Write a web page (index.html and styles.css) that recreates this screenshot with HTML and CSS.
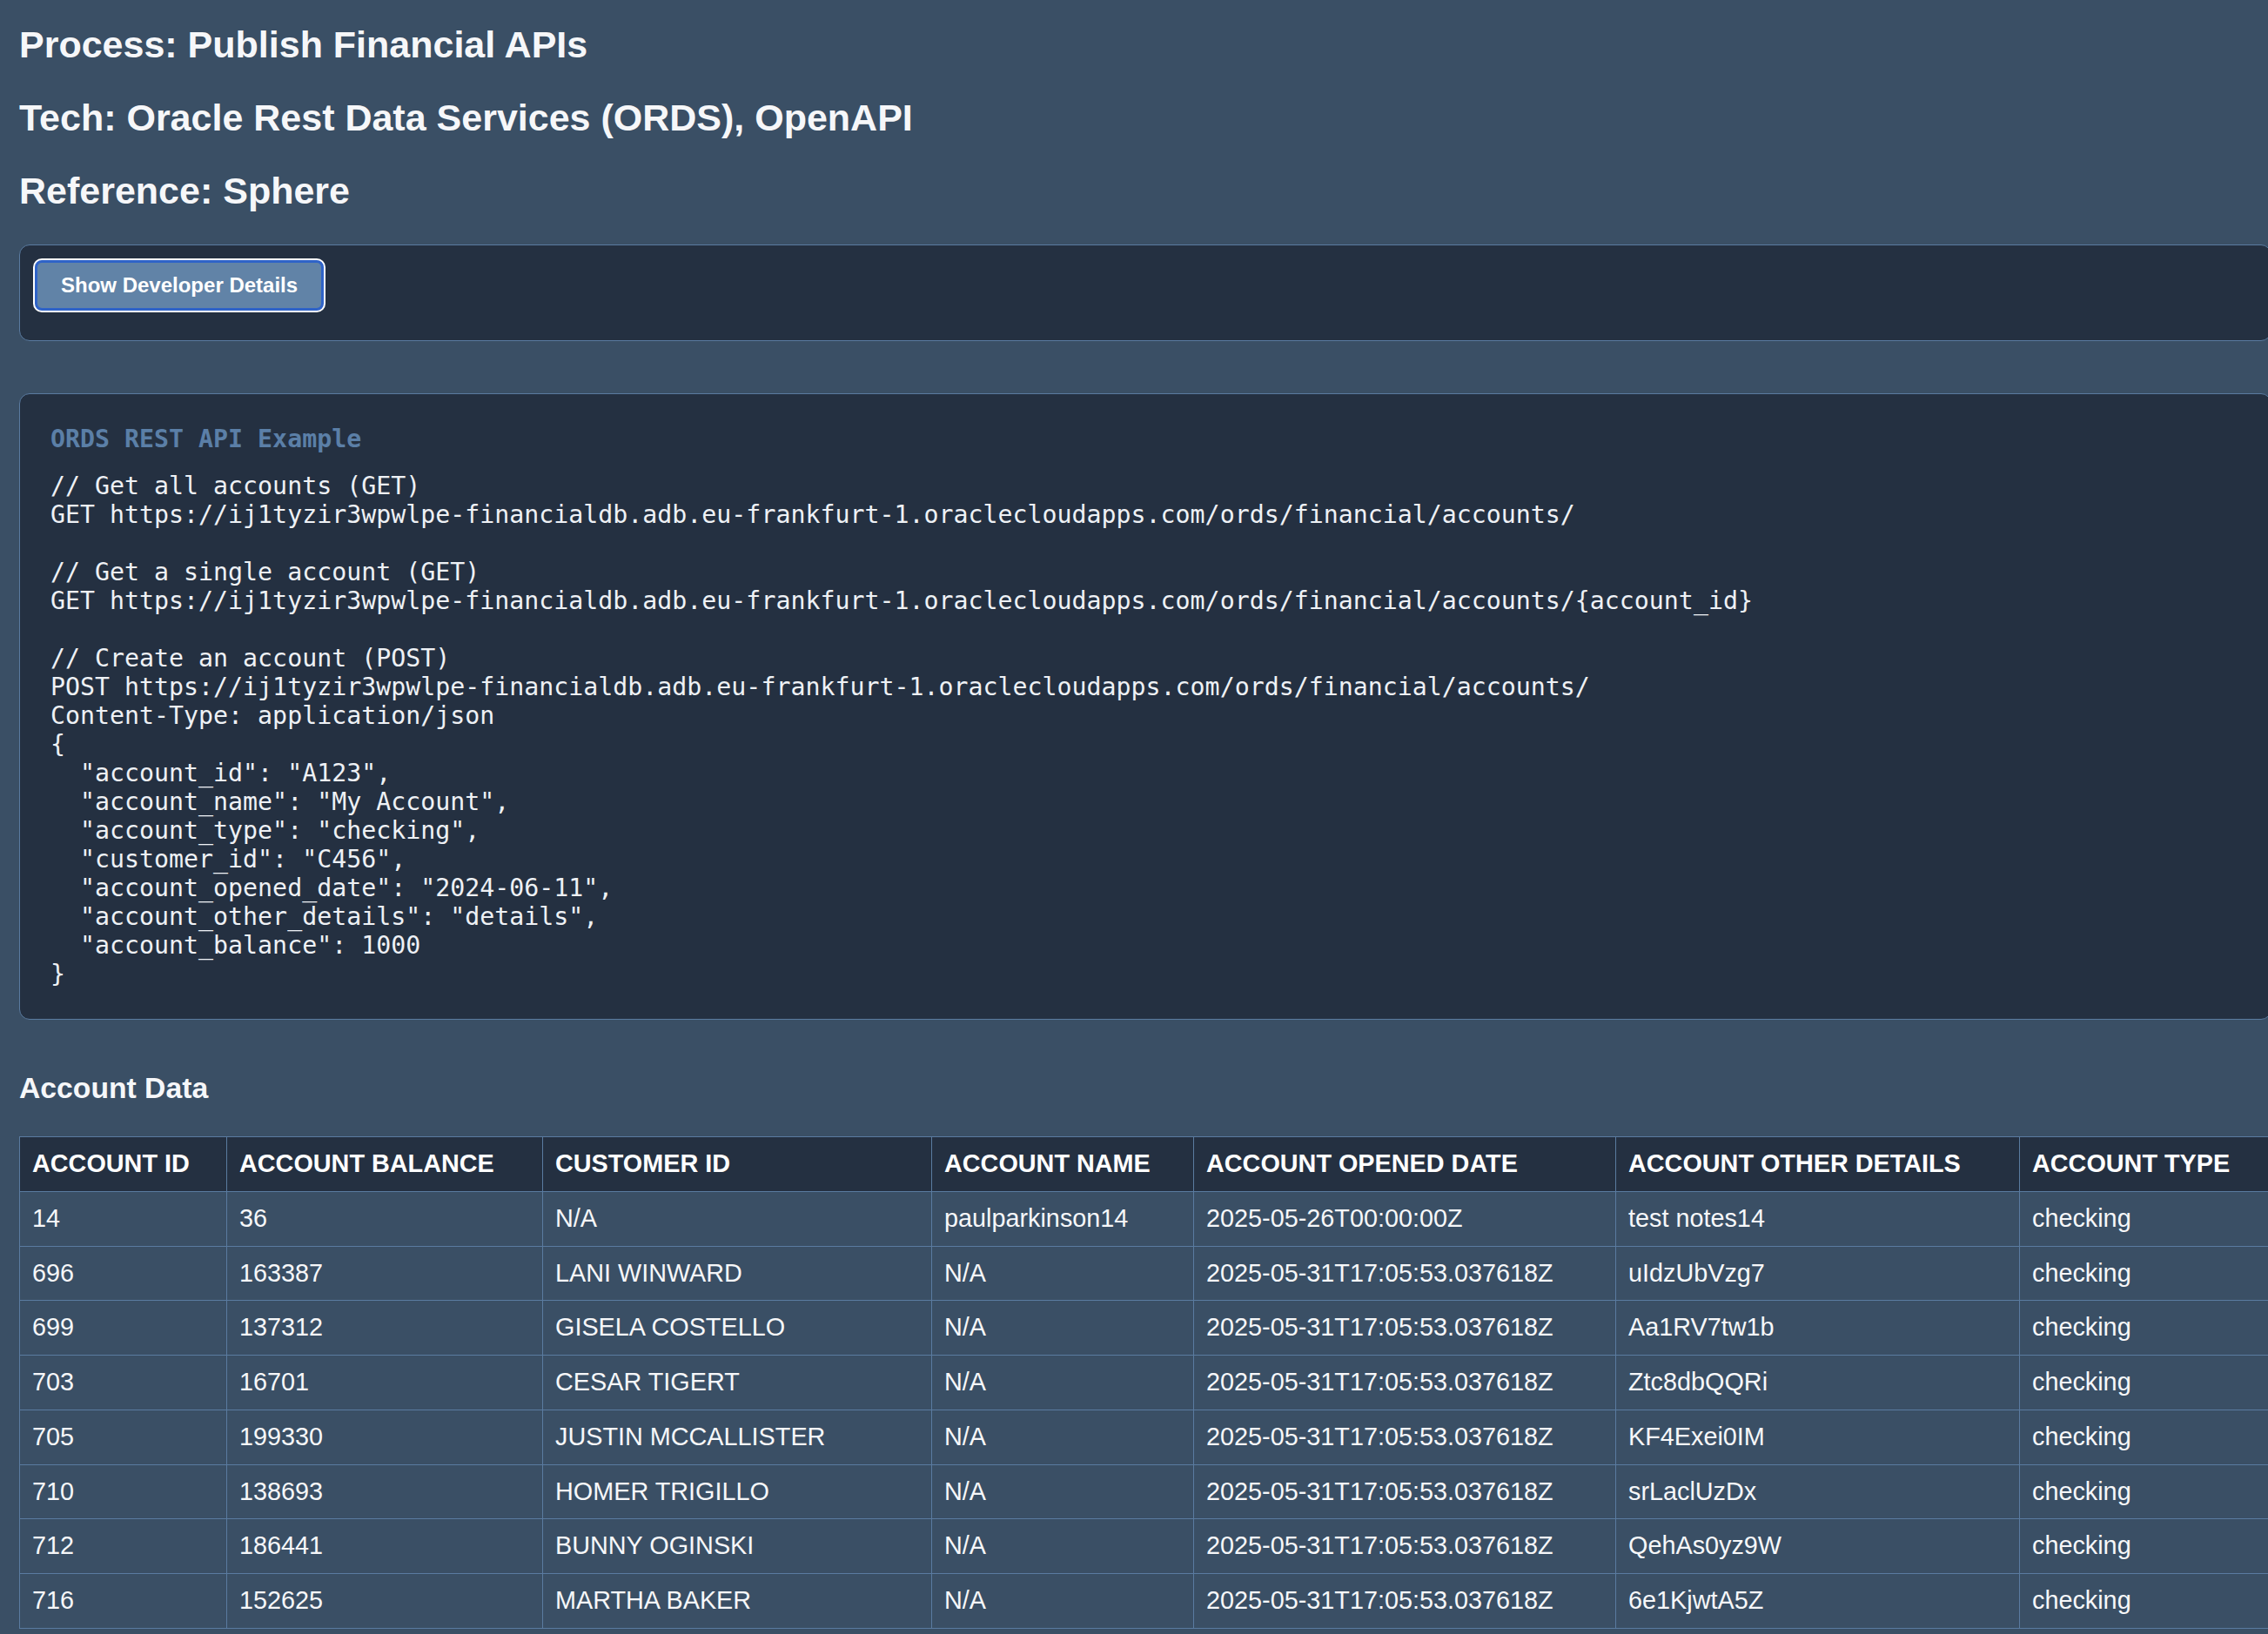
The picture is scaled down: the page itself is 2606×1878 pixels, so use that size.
FILE: index.html
```html
<!DOCTYPE html>
<html lang="en">
<head>
<meta charset="utf-8">
<title>Publish Financial APIs</title>
<link rel="stylesheet" href="styles.css">
</head>
<body>
<header class="titles">
  <h2 class="title">Process: Publish Financial APIs</h2>
  <h2 class="title">Tech: Oracle Rest Data Services (ORDS), OpenAPI</h2>
  <h2 class="title">Reference: Sphere</h2>
</header>

<section class="panel panel-controls">
  <button class="btn" type="button">Show Developer Details</button>
</section>

<section class="panel panel-code">
  <h4 class="code-title">ORDS REST API Example</h4>
<pre class="code">// Get all accounts (GET)
GET https://ij1tyzir3wpwlpe-financialdb.adb.eu-frankfurt-1.oraclecloudapps.com/ords/financial/accounts/

// Get a single account (GET)
GET https://ij1tyzir3wpwlpe-financialdb.adb.eu-frankfurt-1.oraclecloudapps.com/ords/financial/accounts/{account_id}

// Create an account (POST)
POST https://ij1tyzir3wpwlpe-financialdb.adb.eu-frankfurt-1.oraclecloudapps.com/ords/financial/accounts/
Content-Type: application/json
{
  "account_id": "A123",
  "account_name": "My Account",
  "account_type": "checking",
  "customer_id": "C456",
  "account_opened_date": "2024-06-11",
  "account_other_details": "details",
  "account_balance": 1000
}</pre>
</section>

<h3 class="section-title">Account Data</h3>

<table class="data">
  <colgroup>
    <col class="c-id"><col class="c-bal"><col class="c-cust"><col class="c-name"><col class="c-date"><col class="c-other"><col class="c-type">
  </colgroup>
  <thead>
    <tr><th>ACCOUNT ID</th><th>ACCOUNT BALANCE</th><th>CUSTOMER ID</th><th>ACCOUNT NAME</th><th>ACCOUNT OPENED DATE</th><th>ACCOUNT OTHER DETAILS</th><th>ACCOUNT TYPE</th></tr>
  </thead>
  <tbody>
    <tr><td>14</td><td>36</td><td>N/A</td><td>paulparkinson14</td><td>2025-05-26T00:00:00Z</td><td>test notes14</td><td>checking</td></tr>
    <tr><td>696</td><td>163387</td><td>LANI WINWARD</td><td>N/A</td><td>2025-05-31T17:05:53.037618Z</td><td>uIdzUbVzg7</td><td>checking</td></tr>
    <tr><td>699</td><td>137312</td><td>GISELA COSTELLO</td><td>N/A</td><td>2025-05-31T17:05:53.037618Z</td><td>Aa1RV7tw1b</td><td>checking</td></tr>
    <tr><td>703</td><td>16701</td><td>CESAR TIGERT</td><td>N/A</td><td>2025-05-31T17:05:53.037618Z</td><td>Ztc8dbQQRi</td><td>checking</td></tr>
    <tr><td>705</td><td>199330</td><td>JUSTIN MCCALLISTER</td><td>N/A</td><td>2025-05-31T17:05:53.037618Z</td><td>KF4Exei0IM</td><td>checking</td></tr>
    <tr><td>710</td><td>138693</td><td>HOMER TRIGILLO</td><td>N/A</td><td>2025-05-31T17:05:53.037618Z</td><td>srLaclUzDx</td><td>checking</td></tr>
    <tr><td>712</td><td>186441</td><td>BUNNY OGINSKI</td><td>N/A</td><td>2025-05-31T17:05:53.037618Z</td><td>QehAs0yz9W</td><td>checking</td></tr>
    <tr><td>716</td><td>152625</td><td>MARTHA BAKER</td><td>N/A</td><td>2025-05-31T17:05:53.037618Z</td><td>6e1KjwtA5Z</td><td>checking</td></tr>
  </tbody>
</table>
</body>
</html>
```
FILE: styles.css
```css
html {
  overflow: hidden;
}

body {
  margin: 0;
  padding: 27px 0 40px 22px;
  background: #3a4f65;
  color: #f6f7f9;
  font-family: "Liberation Sans", Arial, Helvetica, sans-serif;
}

.titles {
  display: flex;
  flex-direction: column;
  gap: 35px;
  margin-bottom: 37px;
}

.title {
  margin: 0;
  font-size: 43px;
  line-height: 49px;
  font-weight: bold;
}

.panel {
  background: #243041;
  border: 1px solid #5a7ba0;
  border-radius: 12px;
  margin-right: -4px;
}

.panel-controls {
  padding: 17px;
  margin-bottom: 60px;
}

.btn {
  display: block;
  margin: 0 0 17px;
  padding: 12px 27px;
  font-family: "Liberation Sans", Arial, sans-serif;
  font-size: 24px;
  line-height: 28px;
  font-weight: bold;
  color: #ffffff;
  background: #6183a7;
  border: 3px solid #2f63c8;
  border-radius: 8px;
  box-shadow: 0 0 0 2px #ffffff;
  cursor: pointer;
}

.panel-code {
  padding: 35px;
  margin-bottom: 59px;
}

.code-title {
  margin: 0 0 21px;
  font-family: "DejaVu Sans Mono", Menlo, monospace;
  font-size: 28.25px;
  line-height: 33px;
  font-weight: bold;
  color: #5b7fa7;
}

.code {
  margin: 0;
  font-family: "DejaVu Sans Mono", Menlo, monospace;
  font-size: 28.25px;
  line-height: 33px;
  color: #eef1f5;
  white-space: pre;
}

.section-title {
  margin: 0 0 37px;
  font-size: 33.7px;
  line-height: 38px;
  font-weight: bold;
}

.data {
  border-collapse: collapse;
  table-layout: fixed;
  width: 2620px;
}

.data th,
.data td {
  border: 1px solid #5a7ba0;
  padding: 14px;
  font-size: 28.8px;
  line-height: 33.75px;
  text-align: left;
  white-space: nowrap;
  overflow: hidden;
}

.data th {
  background: #243041;
  font-weight: bold;
  color: #ffffff;
}

.c-id { width: 238px; }
.c-bal { width: 363px; }
.c-cust { width: 447px; }
.c-name { width: 301px; }
.c-date { width: 485px; }
.c-other { width: 464px; }
.c-type { width: 322px; }
```
